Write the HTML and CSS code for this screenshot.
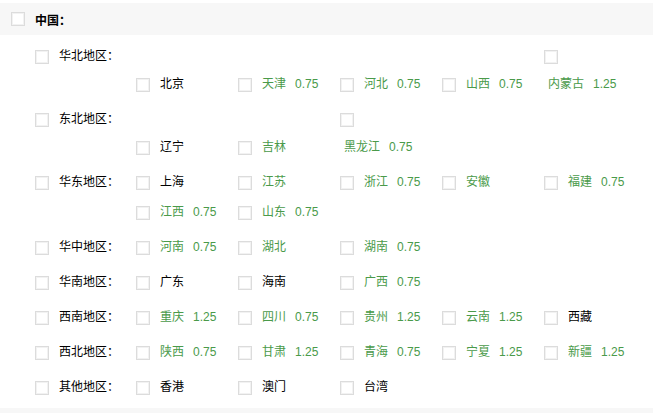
FILE: index.html
```html
<!DOCTYPE html>
<html lang="zh-CN">
<head>
    <meta charset="UTF-8">
    <title>配送区域</title>
    <link rel="stylesheet" href="styles.css">
</head>
<body>

    <!-- Country header -->
    <div class="country-head">
        <span class="box"></span>
        <span class="country-name">中国：</span>
    </div>

    <!-- Regions -->
    <div class="regions">

        <div class="region">
            <div class="region-name"><span class="box"></span><span>华北地区：</span></div>
            <div class="cities">
                <div class="city"><span class="box"></span><wbr><span class="label">北京</span></div>
                <div class="city on"><span class="box"></span><wbr><span class="label">天津<span class="price">0.75</span></span></div>
                <div class="city on"><span class="box"></span><wbr><span class="label">河北<span class="price">0.75</span></span></div>
                <div class="city on"><span class="box"></span><wbr><span class="label">山西<span class="price">0.75</span></span></div>
                <div class="city on"><span class="box"></span><wbr><span class="label">内蒙古<span class="price">1.25</span></span></div>
            </div>
        </div>

        <div class="region">
            <div class="region-name"><span class="box"></span><span>东北地区：</span></div>
            <div class="cities">
                <div class="city"><span class="box"></span><wbr><span class="label">辽宁</span></div>
                <div class="city on"><span class="box"></span><wbr><span class="label">吉林</span></div>
                <div class="city on"><span class="box"></span><wbr><span class="label">黑龙江<span class="price">0.75</span></span></div>
            </div>
        </div>

        <div class="region">
            <div class="region-name"><span class="box"></span><span>华东地区：</span></div>
            <div class="cities">
                <div class="city"><span class="box"></span><wbr><span class="label">上海</span></div>
                <div class="city on"><span class="box"></span><wbr><span class="label">江苏</span></div>
                <div class="city on"><span class="box"></span><wbr><span class="label">浙江<span class="price">0.75</span></span></div>
                <div class="city on"><span class="box"></span><wbr><span class="label">安徽</span></div>
                <div class="city on"><span class="box"></span><wbr><span class="label">福建<span class="price">0.75</span></span></div>
                <div class="city on"><span class="box"></span><wbr><span class="label">江西<span class="price">0.75</span></span></div>
                <div class="city on"><span class="box"></span><wbr><span class="label">山东<span class="price">0.75</span></span></div>
            </div>
        </div>

        <div class="region">
            <div class="region-name"><span class="box"></span><span>华中地区：</span></div>
            <div class="cities">
                <div class="city on"><span class="box"></span><wbr><span class="label">河南<span class="price">0.75</span></span></div>
                <div class="city on"><span class="box"></span><wbr><span class="label">湖北</span></div>
                <div class="city on"><span class="box"></span><wbr><span class="label">湖南<span class="price">0.75</span></span></div>
            </div>
        </div>

        <div class="region">
            <div class="region-name"><span class="box"></span><span>华南地区：</span></div>
            <div class="cities">
                <div class="city"><span class="box"></span><wbr><span class="label">广东</span></div>
                <div class="city"><span class="box"></span><wbr><span class="label">海南</span></div>
                <div class="city on"><span class="box"></span><wbr><span class="label">广西<span class="price">0.75</span></span></div>
            </div>
        </div>

        <div class="region">
            <div class="region-name"><span class="box"></span><span>西南地区：</span></div>
            <div class="cities">
                <div class="city on"><span class="box"></span><wbr><span class="label">重庆<span class="price">1.25</span></span></div>
                <div class="city on"><span class="box"></span><wbr><span class="label">四川<span class="price">0.75</span></span></div>
                <div class="city on"><span class="box"></span><wbr><span class="label">贵州<span class="price">1.25</span></span></div>
                <div class="city on"><span class="box"></span><wbr><span class="label">云南<span class="price">1.25</span></span></div>
                <div class="city"><span class="box"></span><wbr><span class="label">西藏</span></div>
            </div>
        </div>

        <div class="region">
            <div class="region-name"><span class="box"></span><span>西北地区：</span></div>
            <div class="cities">
                <div class="city on"><span class="box"></span><wbr><span class="label">陕西<span class="price">0.75</span></span></div>
                <div class="city on"><span class="box"></span><wbr><span class="label">甘肃<span class="price">1.25</span></span></div>
                <div class="city on"><span class="box"></span><wbr><span class="label">青海<span class="price">0.75</span></span></div>
                <div class="city on"><span class="box"></span><wbr><span class="label">宁夏<span class="price">1.25</span></span></div>
                <div class="city on"><span class="box"></span><wbr><span class="label">新疆<span class="price">1.25</span></span></div>
            </div>
        </div>

        <div class="region">
            <div class="region-name"><span class="box"></span><span>其他地区：</span></div>
            <div class="cities">
                <div class="city"><span class="box"></span><wbr><span class="label">香港</span></div>
                <div class="city"><span class="box"></span><wbr><span class="label">澳门</span></div>
                <div class="city"><span class="box"></span><wbr><span class="label">台湾</span></div>
            </div>
        </div>

    </div>

    <div class="page-foot"></div>

</body>
</html>
```

FILE: styles.css
```css
body {
    font-family: "Liberation Sans", "Noto Sans CJK SC", sans-serif;
    font-size: 12px;
    color: #000;
    background-color: #fff;
    margin: 0;
    padding-top: 3px;
}

/* Checkbox square */
.box {
    display: inline-block;
    width: 14px;
    height: 14px;
    box-sizing: border-box;
    border: 1px solid #dcdcdc;
    box-shadow: inset 0 0 0 1px #f2f2f2;
    background-color: #fff;
    vertical-align: middle;
    margin-right: 6px;
}

/* Country header */
.country-head {
    display: flex;
    align-items: center;
    height: 32px;
    padding-left: 11px;
    background-color: #f7f7f7;
}

.country-name {
    font-weight: bold;
    margin-left: 4px;
}

/* Regions */
.regions {
    padding: 7px 0 0 35px;
}

.region {
    display: flex;
    align-items: flex-start;
    margin-bottom: 5px;
}

.region-name {
    width: 101px;
    flex-shrink: 0;
    line-height: 28px;
}

.region-name span + span {
    margin-left: 4px;
}

.cities {
    flex: 1;
    display: flex;
    flex-wrap: wrap;
    align-items: last baseline;
}

.city {
    width: 90px;
    margin: 0 12px 2px 0;
    line-height: 28px;
}

.city .label {
    margin-left: 4px;
    white-space: nowrap;
}

.city.on .label {
    color: #4a9a4a;
}

.price {
    margin-left: 9px;
}

.page-foot {
    height: 20px;
    background-color: #f7f7f7;
}
```
